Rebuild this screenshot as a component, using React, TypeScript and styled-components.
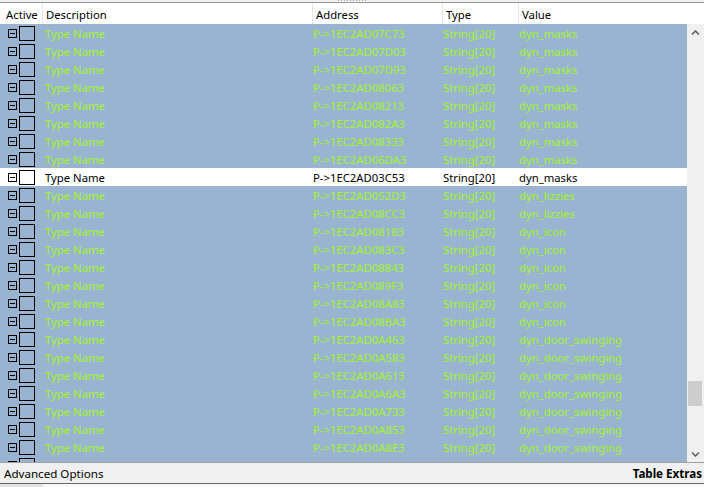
import styled, { createGlobalStyle } from "styled-components";

const GlobalStyle = createGlobalStyle`
  html, body {
    margin: 0;
    padding: 0;
    background: #f0f0f0;
  }
  body {
    font-family: "Noto Sans", "Liberation Sans", sans-serif;
    font-size: 11.3px;
  }
`;

const COLS = "42px 270px 130px 76px 1fr";

const Window = styled.div`
  width: 704px;
  height: 487px;
  display: flex;
  flex-direction: column;
  overflow: hidden;
  background: #f0f0f0;
`;

const Splitter = styled.div`
  height: 2px;
  display: flex;
  justify-content: center;
  border-bottom: 1px solid #9a9a9a;
`;

const Grip = styled.div`
  width: 28px;
  height: 1px;
  background-image: repeating-linear-gradient(
    90deg,
    #a8a8a8 0 1px,
    transparent 1px 3px
  );
`;

const Header = styled.div`
  display: grid;
  grid-template-columns: ${COLS};
  height: 21px;
  background: #ffffff;
`;

const HeaderCell = styled.div<{ $first?: boolean }>`
  border-left: ${(p) => (p.$first ? "none" : "1px solid #e5e5e5")};
  padding-left: ${(p) => (p.$first ? 6 : 3)}px;
  padding-top: 2px;
  line-height: 19px;
  color: #000;
  white-space: nowrap;
  overflow: hidden;
`;

const Body = styled.div`
  flex: 1;
  display: flex;
  min-height: 0;
`;

const List = styled.div`
  flex: 1;
  overflow: hidden;
  background: #99b4d1;
`;

const Row = styled.div<{ $selected?: boolean }>`
  display: grid;
  grid-template-columns: ${COLS};
  height: 18px;
  line-height: 19px;
  background: ${(p) => (p.$selected ? "#ffffff" : "#99b4d1")};
  color: ${(p) => (p.$selected ? "#000000" : "#a4f52c")};
  white-space: nowrap;
`;

const ActiveCell = styled.div`
  display: flex;
  align-items: center;
  padding-left: 8px;
  gap: 2px;
`;

const Expander = styled.div`
  width: 7px;
  height: 7px;
  border: 1px solid #000;
  display: flex;
  align-items: center;
  justify-content: center;
  margin-top: 1px;
  &::after {
    content: "";
    width: 5px;
    height: 1px;
    background: #000;
  }
`;

const CheckBox = styled.div`
  width: 14px;
  height: 13px;
  border: 1px solid #000;
  margin-top: 1px;
`;

const Cell = styled.div<{ $pad: number }>`
  padding-left: ${(p) => p.$pad}px;
  overflow: hidden;
`;

const ScrollBar = styled.div`
  width: 17px;
  display: flex;
  flex-direction: column;
  background: #f0f0f0;
`;

const ArrowButton = styled.div`
  height: 17px;
  display: flex;
  align-items: center;
  justify-content: center;
`;

const Track = styled.div`
  flex: 1;
  display: flex;
  flex-direction: column;
`;

const Thumb = styled.div<{ $offset: number }>`
  margin: ${(p) => p.$offset}px 2px 0 1px;
  height: 25px;
  background: #cdcdcd;
`;

const Footer = styled.div`
  height: 20px;
  border-top: 1px solid #a0a0a0;
  border-bottom: 1px solid #696969;
  display: flex;
  align-items: center;
  justify-content: space-between;
  padding: 0 2px 0 4px;
  color: #000;
  font-size: 11.6px;
`;

const FooterLabel = styled.span<{ $bold?: boolean }>`
  font-weight: ${(p) => (p.$bold ? 700 : 400)};
`;

const BottomStrip = styled.div`
  height: 3px;
  display: flex;
  background: #f7f7f7;
`;

const BottomTab = styled.div`
  width: 43px;
  background: #e3e3e3;
`;

const Chevron = ({ down }: { down?: boolean }) => (
  <svg width="9" height="6" viewBox="0 0 9 6">
    <path
      d={down ? "M1 1.5 L4.5 5 L8 1.5" : "M1 4.5 L4.5 1 L8 4.5"}
      fill="none"
      stroke="#606060"
      strokeWidth="1.6"
    />
  </svg>
);

const rows: [string, string][] = [
  ["P->1EC2AD07C73", "dyn_masks"],
  ["P->1EC2AD07D03", "dyn_masks"],
  ["P->1EC2AD07D93", "dyn_masks"],
  ["P->1EC2AD08063", "dyn_masks"],
  ["P->1EC2AD08213", "dyn_masks"],
  ["P->1EC2AD082A3", "dyn_masks"],
  ["P->1EC2AD08333", "dyn_masks"],
  ["P->1EC2AD06DA3", "dyn_masks"],
  ["P->1EC2AD03C53", "dyn_masks"],
  ["P->1EC2AD052D3", "dyn_lizzies"],
  ["P->1EC2AD08CC3", "dyn_lizzies"],
  ["P->1EC2AD08183", "dyn_icon"],
  ["P->1EC2AD083C3", "dyn_icon"],
  ["P->1EC2AD08843", "dyn_icon"],
  ["P->1EC2AD089F3", "dyn_icon"],
  ["P->1EC2AD08A83", "dyn_icon"],
  ["P->1EC2AD08BA3", "dyn_icon"],
  ["P->1EC2AD0A463", "dyn_door_swinging"],
  ["P->1EC2AD0A583", "dyn_door_swinging"],
  ["P->1EC2AD0A613", "dyn_door_swinging"],
  ["P->1EC2AD0A6A3", "dyn_door_swinging"],
  ["P->1EC2AD0A733", "dyn_door_swinging"],
  ["P->1EC2AD0A853", "dyn_door_swinging"],
  ["P->1EC2AD0A8E3", "dyn_door_swinging"],
  ["P->1EC2AD0A973", "dyn_door_swinging"],
];

const SELECTED = 8;

export default function App() {
  return (
    <Window>
      <GlobalStyle />
      <Splitter>
        <Grip />
      </Splitter>
      <Header>
        <HeaderCell $first>Active</HeaderCell>
        <HeaderCell>Description</HeaderCell>
        <HeaderCell>Address</HeaderCell>
        <HeaderCell>Type</HeaderCell>
        <HeaderCell>Value</HeaderCell>
      </Header>
      <Body>
        <List>
          {rows.map(([addr, value], i) => (
            <Row key={i} $selected={i === SELECTED}>
              <ActiveCell>
                <Expander />
                <CheckBox />
              </ActiveCell>
              <Cell $pad={3}>Type Name</Cell>
              <Cell $pad={1}>{addr}</Cell>
              <Cell $pad={1}>String[20]</Cell>
              <Cell $pad={1}>{value}</Cell>
            </Row>
          ))}
        </List>
        <ScrollBar>
          <ArrowButton>
            <Chevron />
          </ArrowButton>
          <Track>
            <Thumb $offset={340} />
          </Track>
          <ArrowButton>
            <Chevron down />
          </ArrowButton>
        </ScrollBar>
      </Body>
      <Footer>
        <FooterLabel>Advanced Options</FooterLabel>
        <FooterLabel $bold>Table Extras</FooterLabel>
      </Footer>
      <BottomStrip>
        <BottomTab />
      </BottomStrip>
    </Window>
  );
}
